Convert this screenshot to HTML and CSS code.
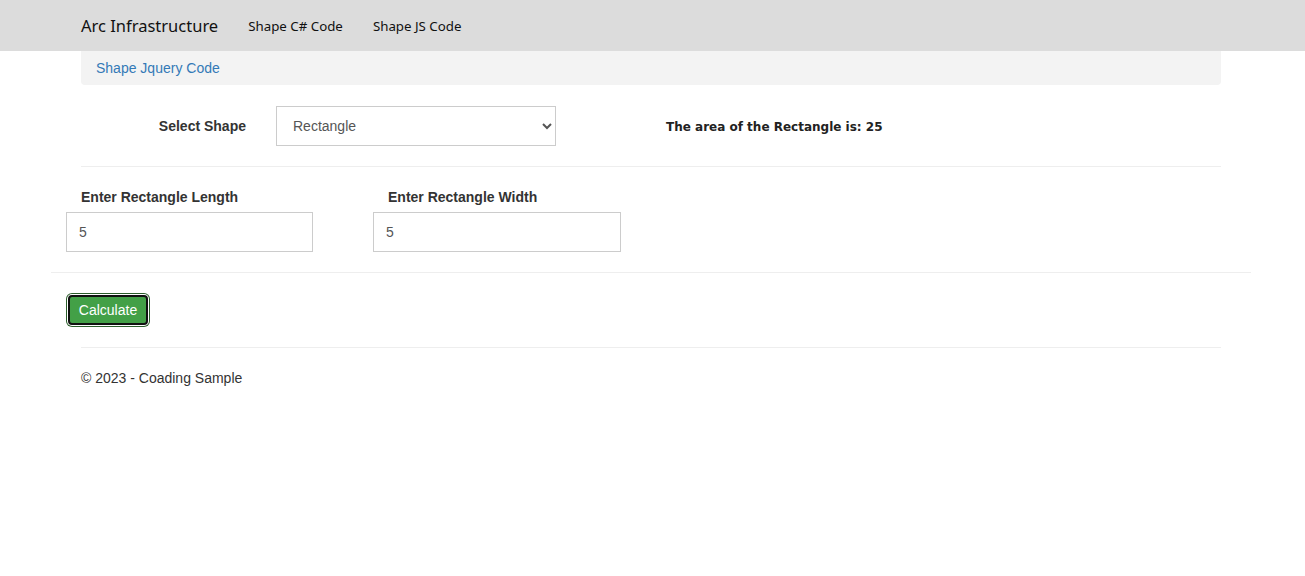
FILE: index.html
```html
<!DOCTYPE html>
<html lang="en">
<head>
<meta charset="utf-8">
<title>Shape Jquery Code</title>
<link rel="stylesheet" href="styles.css">
</head>
<body>
<header class="navbar">
  <div class="nav-inner">
    <a class="brand" href="#">Arc Infrastructure</a>
    <nav class="nav-links">
      <a href="#">Shape C# Code</a>
      <a href="#">Shape JS Code</a>
    </nav>
  </div>
</header>
<div class="crumb">
  <a href="#">Shape Jquery Code</a>
</div>
<main class="content">
  <div class="shape-row">
    <label class="shape-label" for="shape">Select Shape</label>
    <select id="shape" class="field select-field">
      <option>Rectangle</option>
      <option>Circle</option>
      <option>Triangle</option>
    </select>
    <div class="result">The area of the Rectangle is: 25</div>
  </div>
  <hr class="rule">
  <div class="dims-row">
    <div class="dim">
      <label class="dim-label" for="len">Enter Rectangle Length</label>
      <input id="len" class="field input-field" type="text" value="5">
    </div>
    <div class="dim">
      <label class="dim-label" for="wid">Enter Rectangle Width</label>
      <input id="wid" class="field input-field" type="text" value="5">
    </div>
  </div>
</main>
<hr class="rule-wide">
<div class="actions">
  <button class="btn-calc" type="button">Calculate</button>
</div>
<footer class="footer">
  <hr class="rule">
  <p class="copy">© 2023 - Coading Sample</p>
</footer>
</body>
</html>
```
FILE: styles.css
```css
* { box-sizing: border-box; }
html, body { margin: 0; padding: 0; }
body {
  font-family: "Liberation Sans", Arial, sans-serif;
  font-size: 14px;
  line-height: 20px;
  color: #333;
  background: #fff;
}
a { text-decoration: none; }

.navbar {
  height: 51px;
  background: #dcdcdc;
}
.nav-inner {
  margin-left: 81px;
  display: flex;
  align-items: center;
  height: 51px;
}
.brand {
  font-family: "Noto Sans", "Open Sans", sans-serif;
  font-size: 16.5px;
  color: #111;
  margin-right: 30px;
}
.nav-links {
  display: flex;
  gap: 30px;
}
.nav-links a {
  font-family: "Noto Sans", "Open Sans", sans-serif;
  font-size: 13.3px;
  color: #111;
}

.crumb {
  margin-left: 81px;
  width: 1140px;
  height: 34px;
  background: #f3f3f3;
  border-radius: 0 0 4px 4px;
  padding: 7px 15px;
}
.crumb a { color: #337ab7; }

.content {
  margin-left: 66px;
  width: 1170px;
}
.shape-row {
  display: flex;
  align-items: center;
  margin-top: 21px;
  height: 40px;
}
.shape-label {
  width: 195px;
  padding-right: 15px;
  text-align: right;
  font-weight: bold;
  margin-right: 15px;
}
.field {
  height: 40px;
  border: 1px solid #ccc;
  font-family: "Liberation Sans", Arial, sans-serif;
  font-size: 14px;
  color: #555;
  background: #fff;
}
.select-field {
  width: 280px;
  padding: 0 12px;
  border-radius: 0;
}
.result {
  margin-left: 110px;
  padding-top: 1px;
  font-family: "Comic Sans MS", "DejaVu Sans", sans-serif;
  font-weight: bold;
  font-size: 12px;
  color: #222;
}

.rule {
  margin: 20px 0 0 15px;
  width: 1140px;
  border: 0;
  border-top: 1px solid #eee;
  height: 0;
}
.dims-row {
  display: flex;
  gap: 59px;
  margin-top: 20px;
}
.dim {
  display: flex;
  flex-direction: column;
  width: 248px;
}
.dim-label {
  font-weight: bold;
  padding-left: 15px;
  margin-bottom: 5px;
}
.input-field {
  width: 247px;
  padding: 0 12px;
}
.dim + .dim .input-field { width: 248px; }

.rule-wide {
  margin: 20px 0 0 51px;
  width: 1200px;
  border: 0;
  border-top: 1px solid #eee;
  height: 0;
}
.actions {
  margin: 22px 0 0 68px;
  height: 30px;
}
.btn-calc {
  display: block;
  width: 80px;
  height: 30px;
  background: #43a047;
  color: #fff;
  font-family: "Liberation Sans", Arial, sans-serif;
  font-size: 14px;
  border: 2px solid #111;
  border-radius: 4px;
  box-shadow: 0 0 0 1px #fff, 0 0 0 2px #2b5e2b;
  padding: 0;
}

.footer {
  margin-left: 66px;
}
.footer .rule { margin-top: 22px; }
.copy {
  margin: 20px 0 0 15px;
}
```
